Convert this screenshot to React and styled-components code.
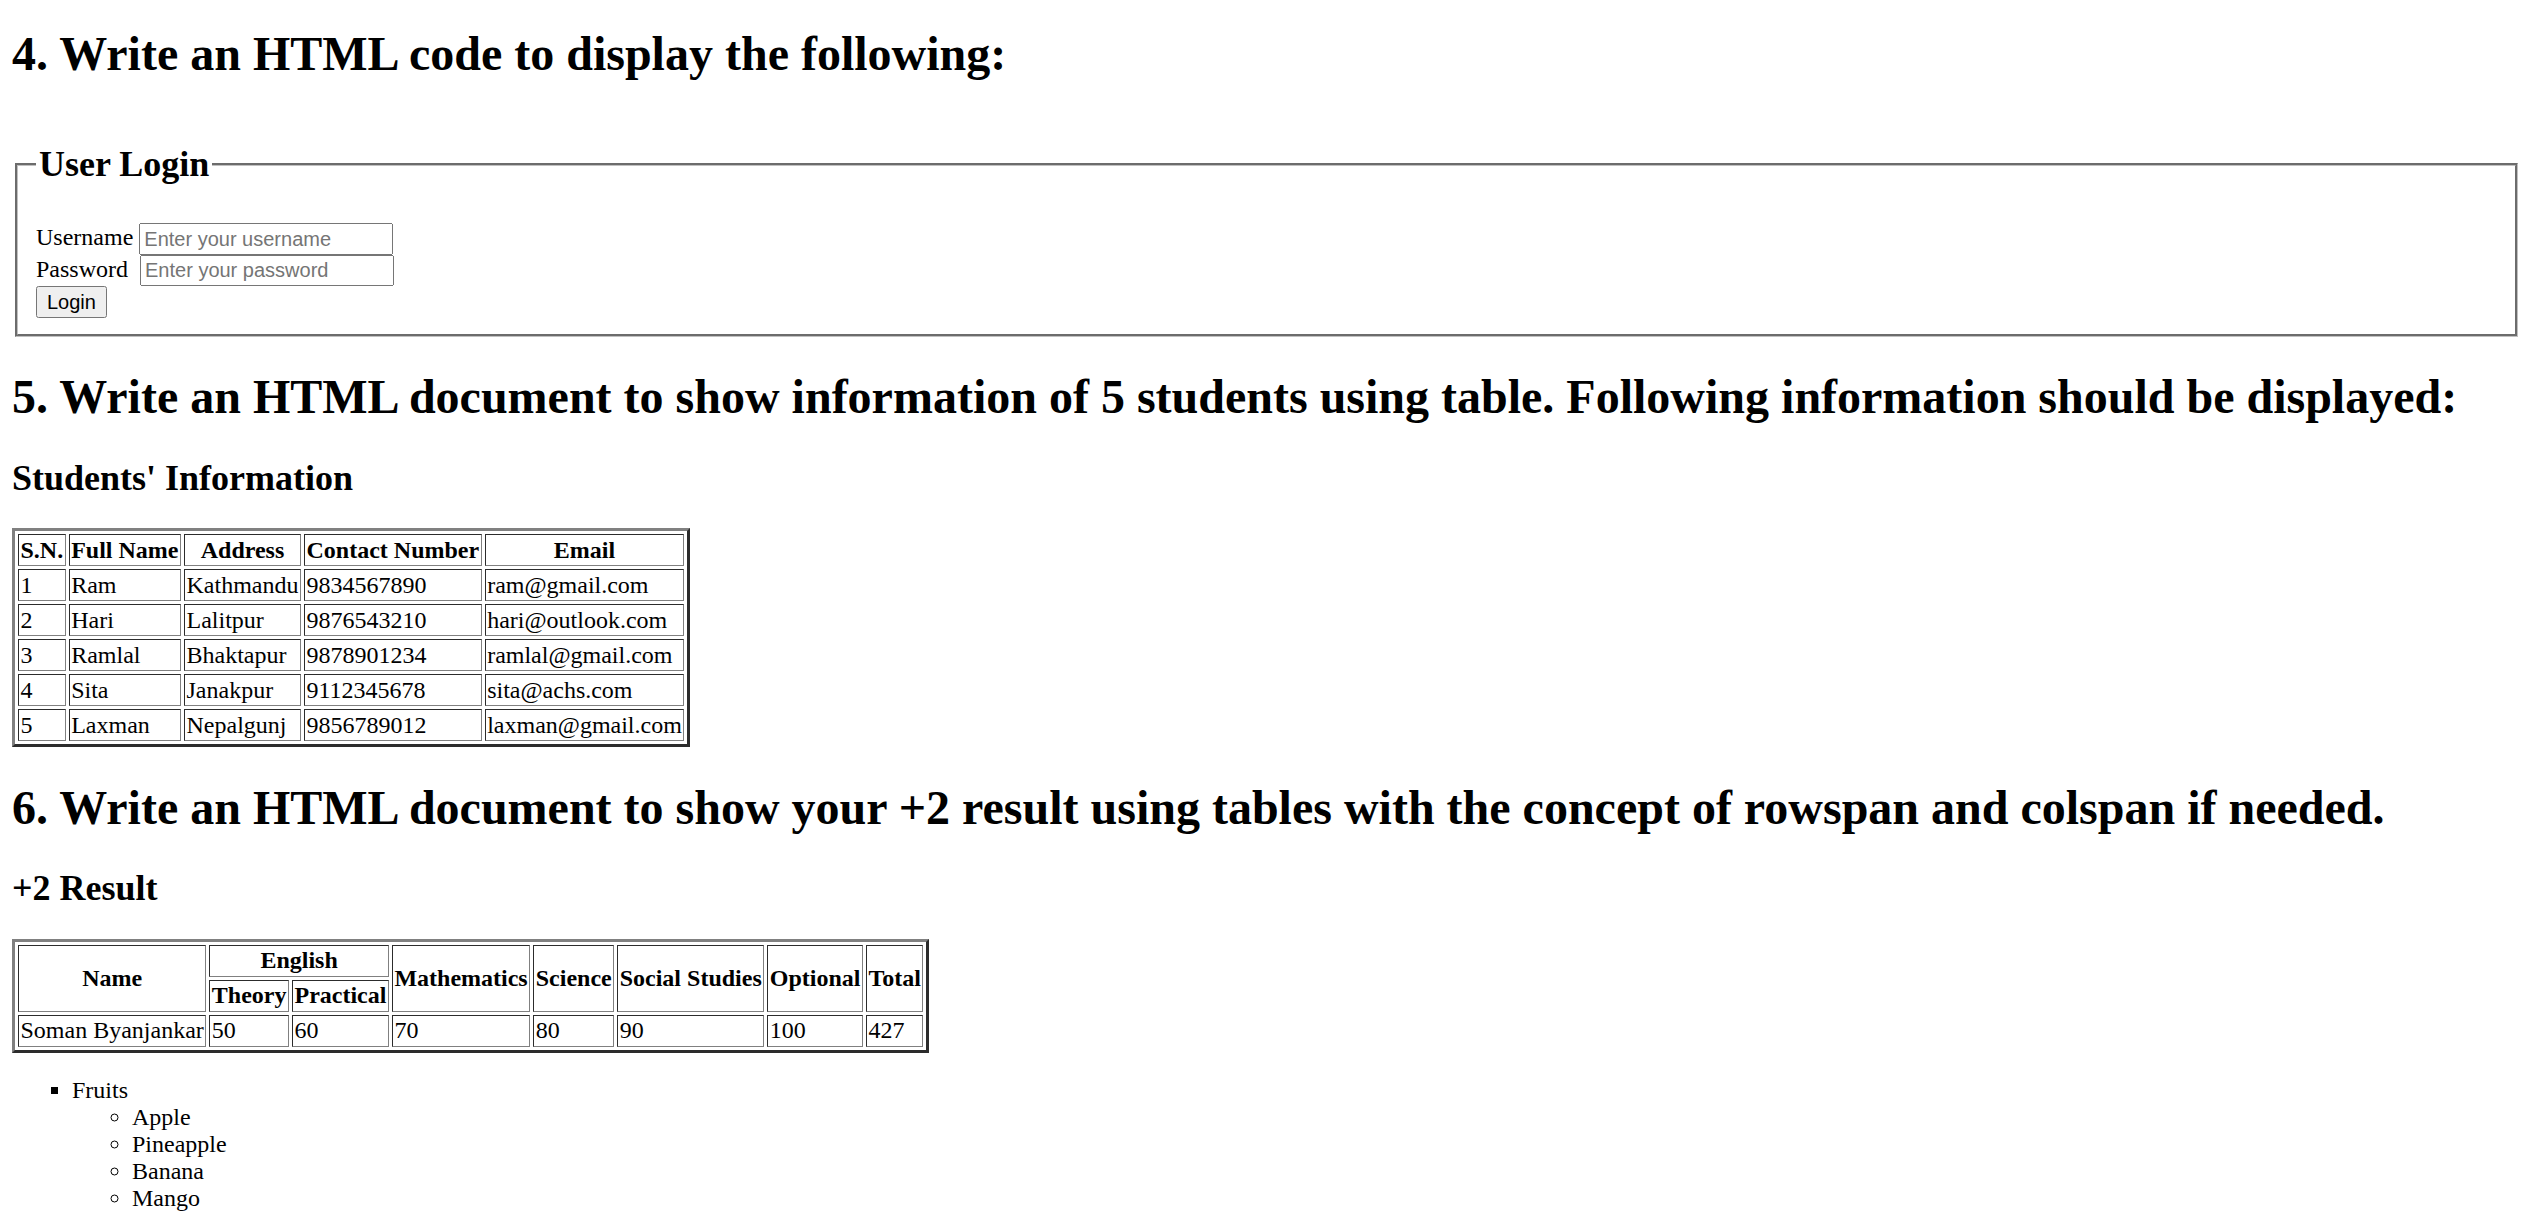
import React from 'react';
import styled, { createGlobalStyle } from 'styled-components';

// Sizes are the browser defaults scaled by 1.5 (the reference was shot at that ratio).
const GlobalStyle = createGlobalStyle`
  body {
    margin: 12px;
    font-family: 'Liberation Serif', 'Times New Roman', serif;
    font-size: 24px;
    color: #000;
    background: #fff;
  }
`;

const Page = styled.main`
  display: block;
`;

// the page in the shot is scrolled a little, so the first heading sits higher
const Heading = styled.h1`
  font-size: 48px;
  font-weight: bold;
  margin: 32.16px 0;

  &:first-of-type {
    margin-top: 14px;
  }
`;

const SubHeading = styled.h2`
  font-size: 36px;
  font-weight: bold;
  margin: 29.88px 0;
`;

const LoginBox = styled.fieldset`
  margin: 0 3px;
  padding: 8.4px 18px 16.5px;
  border: 3px groove rgb(192, 192, 192);
`;

const Legend = styled.legend`
  padding: 0 3px;
`;

const TextInput = styled.input`
  box-sizing: border-box;
  width: 254px;
  height: 31.5px;
  padding: 1.5px 3px;
  font-family: 'Liberation Sans', Arial, sans-serif;
  font-size: 20px;
`;

const LoginButton = styled.button`
  box-sizing: border-box;
  height: 31.5px;
  padding: 1.5px 9px;
  font-family: 'Liberation Sans', Arial, sans-serif;
  font-size: 20px;
`;

const DataTable = styled.table`
  border-collapse: separate;
  border-spacing: 3px;
  border: 3px outset gray;
  font-size: 24px;
`;

const HeadCell = styled.th`
  border: 1px inset gray;
  padding: 1.5px;
  font-weight: bold;
  text-align: center;
`;

const Cell = styled.td`
  border: 1px inset gray;
  padding: 1.5px;
`;

const FruitList = styled.ul`
  list-style-type: square;
  margin: 24px 0;
  padding-left: 60px;
`;

const SubList = styled.ul`
  list-style-type: circle;
  margin: 0;
  padding-left: 60px;
`;

const students = [
  ['1', 'Ram', 'Kathmandu', '9834567890', 'ram@gmail.com'],
  ['2', 'Hari', 'Lalitpur', '9876543210', 'hari@outlook.com'],
  ['3', 'Ramlal', 'Bhaktapur', '9878901234', 'ramlal@gmail.com'],
  ['4', 'Sita', 'Janakpur', '9112345678', 'sita@achs.com'],
  ['5', 'Laxman', 'Nepalgunj', '9856789012', 'laxman@gmail.com'],
];

const result = ['Soman Byanjankar', '50', '60', '70', '80', '90', '100', '427'];

const fruits = ['Apple', 'Pineapple', 'Banana', 'Mango'];

export default function App() {
  return (
    <Page>
      <GlobalStyle />
      <Heading>4. Write an HTML code to display the following:</Heading>
      <form onSubmit={e => e.preventDefault()}>
        <LoginBox>
          <Legend>
            <SubHeading>User Login</SubHeading>
          </Legend>
          <label htmlFor="username">Username</label>{' '}
          <TextInput id="username" type="text" placeholder="Enter your username" />
          <br />
          <label htmlFor="password">Password{'\u00a0'}</label>{' '}
          <TextInput id="password" type="password" placeholder="Enter your password" />
          <br />
          <LoginButton type="submit">Login</LoginButton>
        </LoginBox>
      </form>

      <Heading>
        5. Write an HTML document to show information of 5 students using table. Following
        information should be displayed:
      </Heading>
      <SubHeading>Students' Information</SubHeading>
      <DataTable>
        <tbody>
          <tr>
            <HeadCell>S.N.</HeadCell>
            <HeadCell>Full Name</HeadCell>
            <HeadCell>Address</HeadCell>
            <HeadCell>Contact Number</HeadCell>
            <HeadCell>Email</HeadCell>
          </tr>
          {students.map(row => (
            <tr key={row[0]}>
              {row.map((value, i) => (
                <Cell key={i}>{value}</Cell>
              ))}
            </tr>
          ))}
        </tbody>
      </DataTable>

      <Heading>
        6. Write an HTML document to show your +2 result using tables with the concept of rowspan
        and colspan if needed.
      </Heading>
      <SubHeading>+2 Result</SubHeading>
      <DataTable>
        <tbody>
          <tr>
            <HeadCell rowSpan={2}>Name</HeadCell>
            <HeadCell colSpan={2}>English</HeadCell>
            <HeadCell rowSpan={2}>Mathematics</HeadCell>
            <HeadCell rowSpan={2}>Science</HeadCell>
            <HeadCell rowSpan={2}>Social Studies</HeadCell>
            <HeadCell rowSpan={2}>Optional</HeadCell>
            <HeadCell rowSpan={2}>Total</HeadCell>
          </tr>
          <tr>
            <HeadCell>Theory</HeadCell>
            <HeadCell>Practical</HeadCell>
          </tr>
          <tr>
            {result.map((value, i) => (
              <Cell key={i}>{value}</Cell>
            ))}
          </tr>
        </tbody>
      </DataTable>

      <FruitList>
        <li>
          Fruits
          <SubList>
            {fruits.map(fruit => (
              <li key={fruit}>{fruit}</li>
            ))}
          </SubList>
        </li>
      </FruitList>
    </Page>
  );
}
